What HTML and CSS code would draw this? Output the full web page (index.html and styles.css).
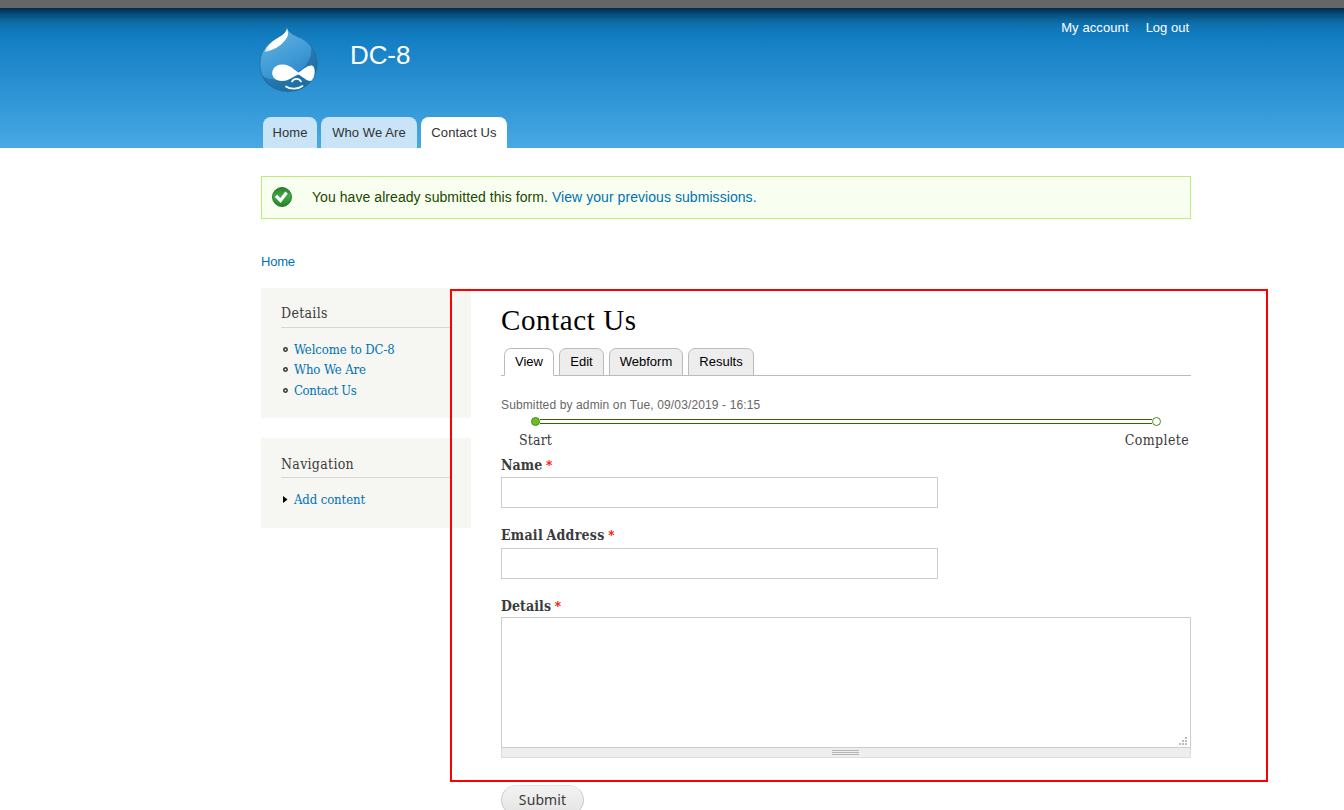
FILE: index.html
```html
<!DOCTYPE html>
<html lang="en">
<head>
<meta charset="utf-8">
<title>Contact Us | DC-8</title>
<link rel="stylesheet" href="styles.css">
</head>
<body>
<div class="toolbar"></div>
<header class="header">
  <div class="header-inner">
    <div class="branding">
      <svg class="logo" width="60" height="66" viewBox="0 0 60 66">
        <defs>
          <linearGradient id="drop" x1="0" y1="0" x2="0.5" y2="1">
            <stop offset="0" stop-color="#6cb6e2"/><stop offset=".6" stop-color="#3f9ad5"/><stop offset="1" stop-color="#2b80bd"/>
          </linearGradient>
          <linearGradient id="shine" x1="1" y1="0" x2="0" y2="1">
            <stop offset="0" stop-color="#fff"/><stop offset=".75" stop-color="#fff"/><stop offset="1" stop-color="#c5e4f6"/>
          </linearGradient>
        </defs>
        <path d="M28 1C30 6 35 8 42 11C52 16 58 26 58 37C58 53 45 64.500 29.500 64.500C13 64.500 1 53 1 37C1 26 6 18.500 14 13.500C21 9 27 7 28 1Z" fill="url(#drop)" stroke="#23719f" stroke-width=".8"/>
        <path d="M52 19C54 31 47 40 38 46C29 54 14 55 3 49C7 59 18 64.500 30 64.500C46 64.500 58 53 58 37C58 30 56 24 52 19Z" fill="#125b90" opacity=".5"/>
        <path d="M28 1C29 5 30 8 27 12C21 20 15 23 5.500 25C8 19 12 15 17 12C23 8.500 27 6.500 28 1Z" fill="url(#shine)"/>
        <path d="M23 37.500C31 37 35 43 39.500 45.500C43 43.500 48 38 53 38.500C57.500 40 56 53 51.500 54C47 54 43 49 39.500 47.500C34 49 31 54 23 54C10 54 10 38 23 37.500Z" fill="#fff"/>
        <path d="M33 54.500C35 51 40 51 42 54.500M27 59.500C31 62.500 39 62.500 43.500 59" fill="none" stroke="#fff" stroke-width="1.700" stroke-linecap="round"/>
      </svg>
      <div class="site-name">DC-8</div>
      <nav class="account"><a>My account</a><a>Log out</a></nav>
    </div>
    <nav class="main-menu"><a class="m-home">Home</a><a class="m-who">Who We Are</a><a class="m-contact active">Contact Us</a></nav>
  </div>
</header>
<div class="page">
  <div class="message">
    <svg width="20" height="20" viewBox="0 0 20 20">
      <defs><linearGradient id="ok" x1="0" y1="0" x2="0" y2="1"><stop offset="0" stop-color="#287f2b"/><stop offset=".45" stop-color="#45a747"/><stop offset="1" stop-color="#218525"/></linearGradient></defs>
      <circle cx="10" cy="10" r="9.500" fill="url(#ok)" stroke="#277c2c"/>
      <path d="M4 8.800L8.500 13.500L14.500 5.500" fill="none" stroke="#fff" stroke-width="3.200"/>
    </svg>
    <p>You have already submitted this form. <a>View your previous submissions.</a></p>
  </div>
  <div class="breadcrumb"><a>Home</a></div>
  <div class="columns">
    <aside class="sidebar">
      <section class="block block-details">
        <h2 class="t-details">Details</h2>
        <ul>
          <li><svg width="5" height="5" viewBox="0 0 5 5"><circle cx="2.500" cy="2.500" r="1.700" fill="none" stroke="#333" stroke-width="1.500"/></svg><a class="l-welcome">Welcome to DC-8</a></li>
          <li><svg width="5" height="5" viewBox="0 0 5 5"><circle cx="2.500" cy="2.500" r="1.700" fill="none" stroke="#333" stroke-width="1.500"/></svg><a>Who We Are</a></li>
          <li><svg width="5" height="5" viewBox="0 0 5 5"><circle cx="2.500" cy="2.500" r="1.700" fill="none" stroke="#333" stroke-width="1.500"/></svg><a class="l-contact">Contact Us</a></li>
        </ul>
      </section>
      <section class="block block-nav">
        <h2>Navigation</h2>
        <ul><li><svg width="5" height="7" viewBox="0 0 5 7"><path d="M0 0L4.500 3.500L0 7Z" fill="#000"/></svg><a>Add content</a></li></ul>
      </section>
    </aside>
    <main class="content">
      <h1>Contact Us</h1>
      <nav class="tabs"><a class="t-view current">View</a><a class="t-edit">Edit</a><a class="t-webform">Webform</a><a class="t-results">Results</a></nav>
      <div class="submitted">Submitted by admin on Tue, 09/03/2019 - 16:15</div>
      <div class="progress"><i class="dot done"></i><i class="bar"></i><i class="dot"></i></div>
      <div class="steps"><span>Start</span><span class="s-complete">Complete</span></div>
      <label>Name <b>*</b></label>
      <input type="text" class="f-name">
      <label class="lb-mail">Email Address <b>*</b></label>
      <input type="text" class="f-mail">
      <label class="lb-details">Details <b>*</b></label>
      <div class="area">
        <svg width="8" height="8" viewBox="0 0 8 8" shape-rendering="crispEdges"><path d="M6 0h2v2h-2zM3 3h2v2h-2zM6 3h2v2h-2zM0 6h2v2h-2zM3 6h2v2h-2zM6 6h2v2h-2z" fill="#bbb"/></svg>
      </div>
      <div class="grippie"><i></i><i></i><i></i></div>
      <button class="submit">Submit</button>
    </main>
  </div>
</div>
<div class="highlight"></div>
</body>
</html>
```
FILE: styles.css
```css
* { box-sizing: border-box; }
body { margin: 0; height: 810px; overflow: hidden; position: relative; background: #fff; color: #3b3b3b; font-family: "Liberation Sans", Arial, sans-serif; white-space: nowrap; }
a { color: #0071b3; text-decoration: none; }
h1, h2, p, ul { margin: 0; padding: 0; font-weight: normal; }
svg { display: block; flex: none; }
.toolbar { height: 8px; background: #666; }
.header { height: 140px; background: linear-gradient(#002c47 0, #07517e 7px, #0d6ba5 14px, #0f77b8 21px, #147fc4 32px, #48a9e4 100%); }
.header-inner { width: 930px; height: 140px; margin-left: 261px; display: flex; flex-direction: column; justify-content: space-between; }
.branding { display: flex; align-items: flex-start; height: 90px; }
.logo { margin: 19px 0 0 -2px; }
.site-name { margin: 32px 0 0 31px; font-size: 26px; line-height: 30px; color: #fff; letter-spacing: -.1px; }
.account { margin: 12px 2px 0 auto; display: flex; gap: 17px; font-size: 13px; line-height: 16px; }
.account a { color: #fff; }
.account a:first-child { letter-spacing: .1px; }
.main-menu { display: flex; gap: 4px; padding-left: 2px; }
.main-menu a { height: 31px; line-height: 31px; text-align: center; font-size: 13px; color: #333; letter-spacing: .1px; background: #c8e4f6; border-radius: 8px 8px 0 0; }
.main-menu .m-home { width: 54px; }
.main-menu .m-who { width: 96px; }
.main-menu .m-contact { width: 86px; }
.main-menu .active { background: #fff; }
.page { width: 930px; margin: 28px 0 0 261px; }
.message { height: 43px; display: flex; gap: 20px; align-items: center; padding: 0 0 1px 10px; border: 1px solid #be7; background: #f8fff0; color: #234600; font-size: 14px; letter-spacing: .06px; }
.breadcrumb { margin-top: 35px; height: 34px; font-size: 13px; line-height: 16px; letter-spacing: -.2px; }
.columns { display: flex; gap: 30px; align-items: flex-start; }
.sidebar { width: 210px; display: flex; flex-direction: column; gap: 20px; font-family: "DejaVu Serif Condensed", "DejaVu Serif", serif; font-stretch: condensed; }
.block { background: #f6f6f2; padding: 15px 20px 0; }
.block-details { height: 130px; }
.block-nav { height: 90px; }
.block h2 { height: 25px; font-size: 14px; line-height: 20px; letter-spacing: .3px; border-bottom: 1px solid #d6d6d6; }
.block-nav h2 { line-height: 22px; }
.block ul { padding-top: 11px; list-style: none; }
.block li { display: flex; align-items: center; gap: 6px; height: 20.500px; padding-left: 2px; font-size: 13px; letter-spacing: -.1px; }
.block .l-welcome { letter-spacing: -.1px; }
.block .l-contact { letter-spacing: -.36px; }
.content { width: 690px; font-family: "DejaVu Serif Condensed", "DejaVu Serif", serif; font-stretch: condensed; }
h1 { margin-top: 15px; height: 45px; font: 29px/34px "Liberation Serif", Georgia, serif; letter-spacing: .6px; color: #000; }
.tabs { display: flex; gap: 5px; height: 28px; padding-left: 3px; border-bottom: 1px solid #bbb; font: 13px/26px "Liberation Sans", sans-serif; }
.tabs a { height: 28px; border: 1px solid #bbb; border-radius: 7px 7px 0 0; background: #ededed; color: #000; text-align: center; }
.tabs .current { background: #fff; border-bottom-color: #fff; }
.tabs .t-view { width: 50px; }
.tabs .t-edit { width: 45px; }
.tabs .t-webform { width: 74px; }
.tabs .t-results { width: 66px; }
.submitted { margin-top: 21px; height: 20px; font: 12px/16px "Liberation Sans", sans-serif; color: #686868; letter-spacing: .13px; }
.progress { display: flex; align-items: center; height: 9px; margin: 0 30px; }
.dot { width: 9px; height: 9px; border: 1px solid #4b8822; border-radius: 50%; background: #fff; }
.done { background: #6bc01e; }
.bar { flex: 1; height: 5px; border: solid #360; border-width: 1px 0; }
.steps { display: flex; justify-content: space-between; height: 30px; padding: 4px 2px 0 18px; font-size: 14px; line-height: 20px; letter-spacing: .15px; }
.s-complete { letter-spacing: .38px; }
label { display: block; height: 21px; font-size: 14px; line-height: 18px; font-weight: bold; letter-spacing: .08px; word-spacing: -.8px; }
label b { color: #f00; font: bold 12px/16px "DejaVu Serif", serif; }
.lb-mail { letter-spacing: .25px; word-spacing: -1px; }
input { display: block; width: 437px; height: 31px; border: 1px solid #ccc; padding: 2px; background: #fff; }
.f-name { margin-bottom: 18px; }
.f-mail { margin: 1px 0 18px; }
.lb-details { height: 20px; }
.area { height: 131px; border: 1px solid #ccc; display: flex; align-items: flex-end; justify-content: flex-end; padding: 0 3px 2px 0; }
.grippie { height: 10px; border: 1px solid #ddd; border-top: 0; background: #eee; display: flex; flex-direction: column; align-items: center; padding: 2px 2px 0 0; gap: 1px; }
.grippie i { width: 27px; height: 1px; background: #b5b5b5; }
.submit { display: block; margin-top: 27px; width: 83px; height: 30px; padding: 0; border: 1px solid #ccc; border-top-color: #e4e4e4; border-radius: 15px; background: linear-gradient(#f3f3f3, #e4e4e4); color: #3a3a3a; font: 14px/26px "Noto Sans", sans-serif; letter-spacing: .1px; }
.highlight { position: absolute; left: 450px; top: 289px; width: 818px; height: 493px; border: 2px solid #f00; pointer-events: none; }
```
